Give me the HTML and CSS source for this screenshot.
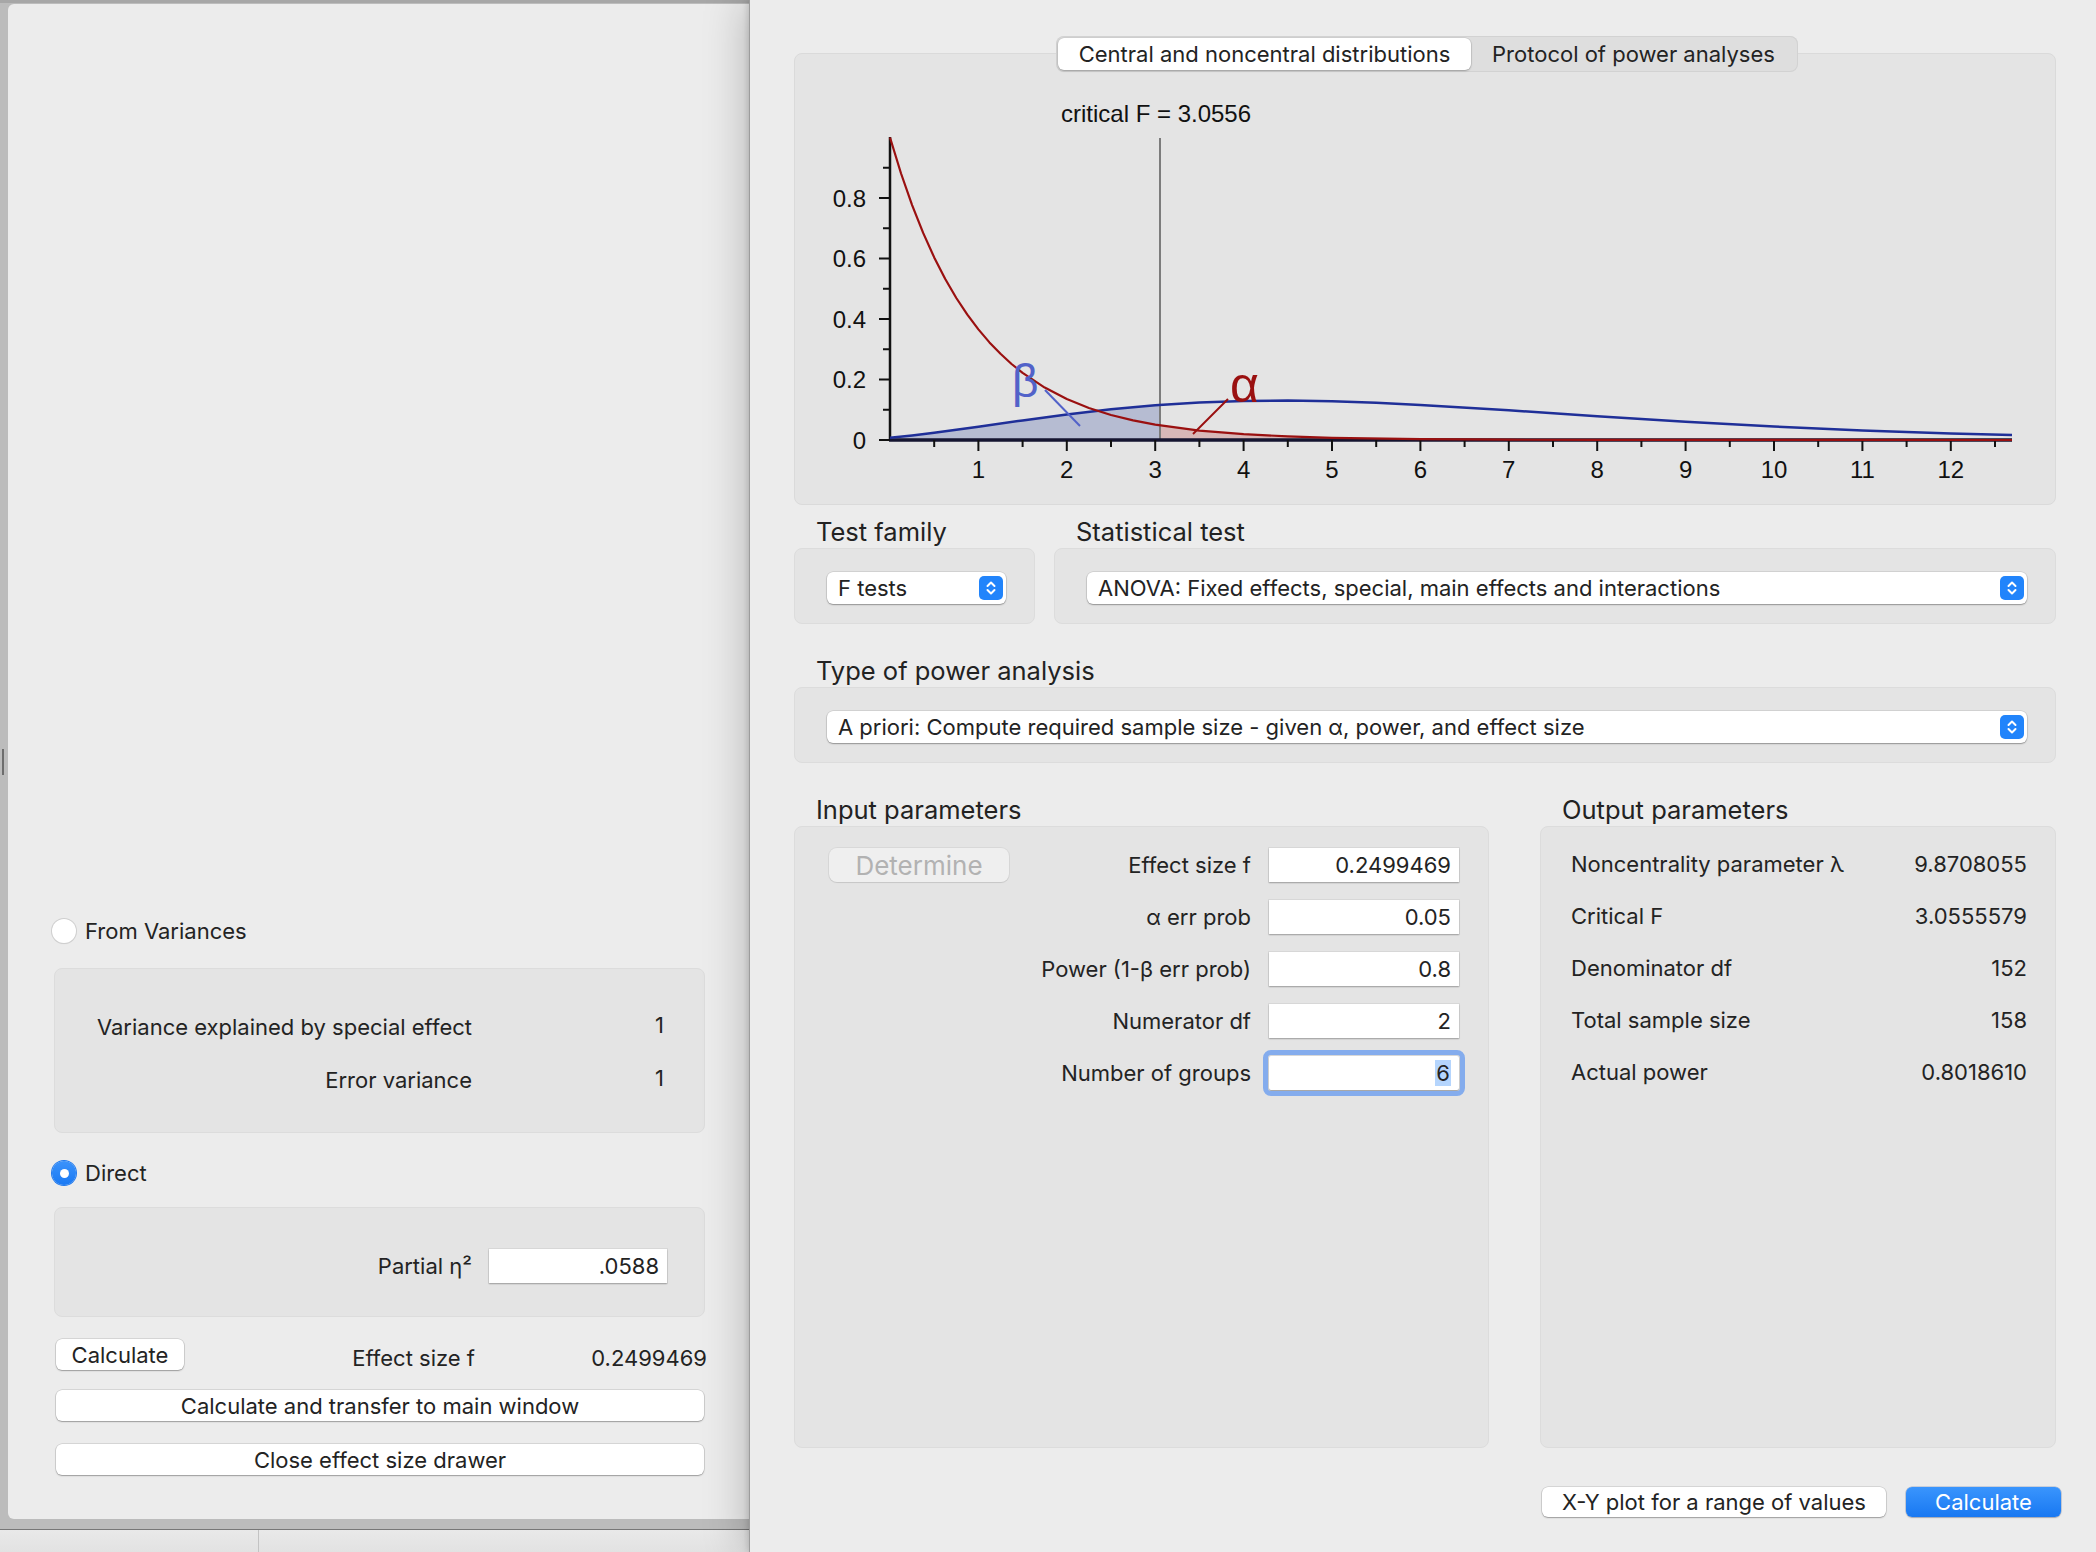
FILE: index.html
```html
<!DOCTYPE html>
<html>
<head>
<meta charset="utf-8">
<link rel="stylesheet" href="styles.css">
</head>
<body>
<div class="screen">
  <div class="side">
    <div class="frame">
      <div class="strip"><span class="handle"></span></div>
      <div class="drawer">
        <div class="radio-row"><span class="radio"></span><span>From Variances</span></div>
        <div class="dbox dbox-var">
          <div class="dgrid">
            <span class="dlabel">Variance explained by special effect</span><span class="dvalue">1</span>
            <span class="dlabel">Error variance</span><span class="dvalue">1</span>
          </div>
        </div>
        <div class="radio-row radio-row-direct"><span class="radio radio-on"></span><span>Direct</span></div>
        <div class="dbox dbox-direct">
          <div class="dgrid">
            <span class="dlabel">Partial η²</span><span class="field">.0588</span>
          </div>
        </div>
        <div class="calc-row">
          <span class="btn btn-small">Calculate</span>
          <span class="dlabel">Effect size f</span>
          <span class="calc-value">0.2499469</span>
        </div>
        <div class="btn btn-wide btn-first">Calculate and transfer to main window</div>
        <div class="btn btn-wide btn-second">Close effect size drawer</div>
      </div>
    </div>
    <div class="dock"><span class="dock-sep"></span></div>
  </div>

  <div class="main">
    <div class="tabs">
      <span class="tab tab-on">Central and noncentral distributions</span>
      <span class="tab tab-off">Protocol of power analyses</span>
    </div>
    <div class="tabbox">
      <svg class="chart" width="1260" height="450" viewBox="0 0 1260 450">
        <g transform="translate(-1,-1)">
          <path class="fill-blue" d="M96,387 L96,384.8 L118.1,382.5 L140.2,379.8 L162.3,376.8 L184.4,373.7 L228.6,367.4 L272.8,361.4 L317,356.2 L361.2,352.2 L366.1,351.8 L366.1,387 Z"/>
          <path class="fill-red" d="M366.1,387 L366.1,372.5 L405.4,377.6 L449.6,381.2 L493.8,383.4 L538,384.8 L626.4,386.1 L714.8,386.7 L803.2,386.9 L1218,387 Z"/>
          <line class="crit" x1="366" y1="85" x2="366" y2="387"/>
          <line class="axis-y" x1="96" y1="84" x2="96" y2="388"/>
          <line class="axis-x" x1="95" y1="387" x2="1218" y2="387"/>
          <g class="ticks">
            <line x1="85" y1="387" x2="96" y2="387"/>
            <line x1="85" y1="326.5" x2="96" y2="326.5"/>
            <line x1="85" y1="266" x2="96" y2="266"/>
            <line x1="85" y1="205.5" x2="96" y2="205.5"/>
            <line x1="85" y1="145" x2="96" y2="145"/>
            <line x1="89" y1="356.75" x2="96" y2="356.75"/>
            <line x1="89" y1="296.25" x2="96" y2="296.25"/>
            <line x1="89" y1="235.75" x2="96" y2="235.75"/>
            <line x1="89" y1="175.25" x2="96" y2="175.25"/>
            <line x1="89" y1="114.75" x2="96" y2="114.75"/>
            <line x1="184.4" y1="387" x2="184.4" y2="398"/>
            <line x1="272.8" y1="387" x2="272.8" y2="398"/>
            <line x1="361.2" y1="387" x2="361.2" y2="398"/>
            <line x1="449.6" y1="387" x2="449.6" y2="398"/>
            <line x1="538" y1="387" x2="538" y2="398"/>
            <line x1="626.4" y1="387" x2="626.4" y2="398"/>
            <line x1="714.8" y1="387" x2="714.8" y2="398"/>
            <line x1="803.2" y1="387" x2="803.2" y2="398"/>
            <line x1="891.6" y1="387" x2="891.6" y2="398"/>
            <line x1="980" y1="387" x2="980" y2="398"/>
            <line x1="1068.4" y1="387" x2="1068.4" y2="398"/>
            <line x1="1156.8" y1="387" x2="1156.8" y2="398"/>
            <line x1="140.2" y1="387" x2="140.2" y2="394"/>
            <line x1="228.6" y1="387" x2="228.6" y2="394"/>
            <line x1="317" y1="387" x2="317" y2="394"/>
            <line x1="405.4" y1="387" x2="405.4" y2="394"/>
            <line x1="493.8" y1="387" x2="493.8" y2="394"/>
            <line x1="582.2" y1="387" x2="582.2" y2="394"/>
            <line x1="670.6" y1="387" x2="670.6" y2="394"/>
            <line x1="759" y1="387" x2="759" y2="394"/>
            <line x1="847.4" y1="387" x2="847.4" y2="394"/>
            <line x1="935.8" y1="387" x2="935.8" y2="394"/>
            <line x1="1024.2" y1="387" x2="1024.2" y2="394"/>
            <line x1="1112.6" y1="387" x2="1112.6" y2="394"/>
            <line x1="1201" y1="387" x2="1201" y2="394"/>
          </g>
          <path class="curve-blue" d="M96,384.8 L118.1,382.5 L140.2,379.8 L162.3,376.8 L184.4,373.7 L228.6,367.4 L272.8,361.4 L317,356.2 L361.2,352.2 L405.4,349.4 L449.6,347.9 L493.8,347.5 L538,348.2 L582.2,349.7 L626.4,351.9 L714.8,357.3 L803.2,363.2 L891.6,368.8 L980,373.6 L1068.4,377.4 L1156.8,380.4 L1218,382"/>
          <path class="curve-red" d="M96,84.5 L107.05,120.5 L118.1,152.1 L129.15,179.9 L140.2,204.4 L151.25,226 L162.3,245 L173.35,261.7 L184.4,276.4 L195.45,289.4 L206.5,300.8 L217.55,311 L228.6,319.8 L250.7,334.6 L272.8,346.1 L294.9,355 L317,362 L339.1,367.4 L361.2,371.7 L405.4,377.6 L449.6,381.2 L493.8,383.4 L538,384.8 L626.4,386.1 L714.8,386.7 L803.2,386.9 L1218,387"/>
          <line class="beta-line" x1="251" y1="337" x2="286" y2="373"/>
          <line class="alpha-line" x1="434" y1="346" x2="399" y2="381"/>
          <text class="crit-label" x="362" y="69">critical F = 3.0556</text>
          <g class="ylabels">
            <text x="72" y="153.5">0.8</text>
            <text x="72" y="214">0.6</text>
            <text x="72" y="274.5">0.4</text>
            <text x="72" y="335">0.2</text>
            <text x="72" y="395.5">0</text>
          </g>
          <g class="xlabels">
            <text x="184.4" y="424.5">1</text>
            <text x="272.8" y="424.5">2</text>
            <text x="361.2" y="424.5">3</text>
            <text x="449.6" y="424.5">4</text>
            <text x="538" y="424.5">5</text>
            <text x="626.4" y="424.5">6</text>
            <text x="714.8" y="424.5">7</text>
            <text x="803.2" y="424.5">8</text>
            <text x="891.6" y="424.5">9</text>
            <text x="980" y="424.5">10</text>
            <text x="1068.4" y="424.5">11</text>
            <text x="1156.8" y="424.5">12</text>
          </g>
          <text class="beta" x="218" y="344">β</text>
          <text class="alpha" x="436" y="349">α</text>
        </g>
      </svg>
    </div>

    <div class="pair">
      <div class="group">
        <div class="group-title">Test family</div>
        <div class="gbox gbox-sel">
          <div class="popup"><span class="popup-text">F tests</span>
            <svg class="stepper" width="24" height="24" viewBox="0 0 24 24"><rect x="0" y="0" width="24" height="24" rx="5"/><path d="M8.5 10 L12 6.5 L15.5 10 M8.5 14 L12 17.5 L15.5 14"/></svg>
          </div>
        </div>
      </div>
      <div class="group">
        <div class="group-title">Statistical test</div>
        <div class="gbox gbox-sel">
          <div class="popup"><span class="popup-text">ANOVA: Fixed effects, special, main effects and interactions</span>
            <svg class="stepper" width="24" height="24" viewBox="0 0 24 24"><rect x="0" y="0" width="24" height="24" rx="5"/><path d="M8.5 10 L12 6.5 L15.5 10 M8.5 14 L12 17.5 L15.5 14"/></svg>
          </div>
        </div>
      </div>
    </div>

    <div class="group group-type">
      <div class="group-title">Type of power analysis</div>
      <div class="gbox gbox-sel">
        <div class="popup"><span class="popup-text">A priori: Compute required sample size - given α, power, and effect size</span>
          <svg class="stepper" width="24" height="24" viewBox="0 0 24 24"><rect x="0" y="0" width="24" height="24" rx="5"/><path d="M8.5 10 L12 6.5 L15.5 10 M8.5 14 L12 17.5 L15.5 14"/></svg>
        </div>
      </div>
    </div>

    <div class="params-pair">
      <div class="group">
        <div class="group-title">Input parameters</div>
        <div class="gbox in-box">
          <span class="determine">Determine</span>
          <div class="params">
            <span class="plabel">Effect size f</span><span class="field">0.2499469</span>
            <span class="plabel">α err prob</span><span class="field">0.05</span>
            <span class="plabel">Power (1-β err prob)</span><span class="field">0.8</span>
            <span class="plabel">Numerator df</span><span class="field">2</span>
            <span class="plabel">Number of groups</span><span class="field field-focus"><span class="sel">6</span></span>
          </div>
        </div>
      </div>
      <div class="group">
        <div class="group-title">Output parameters</div>
        <div class="gbox out-box">
          <span>Noncentrality parameter λ</span><span class="oval">9.8708055</span>
          <span>Critical F</span><span class="oval">3.0555579</span>
          <span>Denominator df</span><span class="oval">152</span>
          <span>Total sample size</span><span class="oval">158</span>
          <span>Actual power</span><span class="oval">0.8018610</span>
        </div>
      </div>
    </div>

    <div class="actions">
      <span class="btn btn-xy">X-Y plot for a range of values</span>
      <span class="btn btn-blue">Calculate</span>
    </div>
  </div>
</div>
</body>
</html>
```
FILE: styles.css
```css
* { box-sizing: border-box; }

html, body {
  margin: 0;
  padding: 0;
}

body {
  width: 2096px;
  height: 1552px;
  overflow: hidden;
  background: #e6e6e6;
  font-family: Inter, "Open Sans", "DejaVu Sans", sans-serif;
  font-size: 22px;
  color: #232323;
}

.screen {
  display: flex;
  height: 1552px;
}

/* ---------- left drawer ---------- */
.side {
  width: 749px;
  flex: none;
  display: flex;
  flex-direction: column;
}

.frame {
  height: 1530px;
  display: flex;
  background: #bcbcbc;
  border-top: 3px solid #a7a7a7;
  padding: 1px 0 10px 0;
  border-bottom: 1px solid #777;
}

.strip {
  width: 8px;
  flex: none;
  display: flex;
  align-items: center;
}

.handle {
  display: block;
  width: 2px;
  height: 26px;
  margin-left: 2px;
  background: #6d6d6d;
}

.drawer {
  flex: 1;
  background: #ececec;
  border-radius: 6px 0 0 6px;
  display: flex;
  flex-direction: column;
  justify-content: flex-end;
  padding: 0 44px 44px 44px;
}

.radio-row {
  display: flex;
  align-items: center;
  height: 24px;
  gap: 9px;
  margin-bottom: 25px;
}

.radio-row-direct {
  margin-top: 28px;
  margin-bottom: 22px;
}

.radio {
  width: 24px;
  height: 24px;
  border-radius: 50%;
  background: #fff;
  box-shadow: 0 0 0 1px #cfcfcf, 0 1px 1px rgba(0,0,0,0.12);
  display: flex;
  align-items: center;
  justify-content: center;
}

.radio-on {
  background: linear-gradient(#3b93fb, #1a79f3);
  box-shadow: 0 0 0 1px #1d78ee;
}

.radio-on::after {
  content: "";
  width: 9px;
  height: 9px;
  border-radius: 50%;
  background: #fff;
}

.dbox {
  margin-left: 2px;
  background: #e4e4e4;
  border: 1px solid #dcdcdc;
  border-radius: 8px;
  padding-right: 37px;
}

.dbox-var {
  height: 165px;
  padding-top: 41px;
}

.dbox-direct {
  height: 110px;
  padding-top: 41px;
}

.dgrid {
  display: grid;
  grid-template-columns: 1fr 178px;
  column-gap: 17px;
  row-gap: 19px;
  grid-auto-rows: 34px;
  align-items: center;
}

.dlabel {
  text-align: right;
  white-space: nowrap;
}

.dvalue {
  text-align: right;
  padding-right: 3px;
  align-self: start;
  line-height: 30px;
}

.field {
  display: block;
  height: 34px;
  line-height: 34px;
  background: #fff;
  text-align: right;
  padding-right: 8px;
  box-shadow: 0 0 0 1px rgba(0,0,0,0.05), 0 1px 1.5px rgba(0,0,0,0.28);
}

.calc-row {
  margin-top: 21px;
  margin-left: 4px;
  margin-right: -2px;
  height: 31px;
  display: grid;
  grid-template-columns: 128px 1fr 232px;
  align-items: center;
}

.calc-row .dlabel {
  margin-top: 7px;
}

.calc-value {
  text-align: right;
  margin-top: 7px;
}

.btn {
  display: flex;
  align-items: center;
  justify-content: center;
  background: #fff;
  border-radius: 6px;
  box-shadow: 0 0 0 0.5px rgba(0,0,0,0.18), 0 1px 1.5px rgba(0,0,0,0.28);
  white-space: nowrap;
}

.btn-small {
  height: 31px;
}

.btn-wide {
  height: 31px;
  margin-left: 4px;
  margin-right: 1px;
}

.btn-first { margin-top: 21px; }
.btn-second { margin-top: 23px; }

.dock {
  flex: 1;
  background: linear-gradient(#e9e9e9, #e2e2e2);
  padding-left: 258px;
}

.dock-sep {
  display: block;
  width: 1px;
  height: 100%;
  background: #c3c3c3;
}

/* ---------- main window ---------- */
.main {
  flex: 1;
  position: relative;
  background: #ececec;
  border-left: 1px solid #9c9c9c;
  box-shadow: -4px 0 40px rgba(0,0,0,0.22), -1px 0 6px rgba(0,0,0,0.15);
  padding: 36px 40px 0 44px;
  display: flex;
  flex-direction: column;
}

.tabs {
  position: relative;
  z-index: 1;
  align-self: center;
  display: flex;
  height: 36px;
  margin-bottom: -19px;
  margin-left: 4px;
  background: #dedede;
  border-radius: 8px;
  box-shadow: inset 0 0 0 1px #d2d2d2;
  padding: 2px;
}

.tab {
  display: flex;
  align-items: center;
  justify-content: center;
  border-radius: 6px;
  white-space: nowrap;
}

.tab-on {
  width: 413px;
  background: #fff;
  box-shadow: 0 0 0 0.5px rgba(0,0,0,0.12), 0 1px 2px rgba(0,0,0,0.25);
}

.tab-off {
  width: 325px;
}

.tabbox {
  height: 452px;
  background: #e4e4e4;
  border: 1px solid #dadada;
  border-radius: 8px;
}

.chart {
  display: block;
}

.chart text {
  font-family: "Liberation Sans", Arial, sans-serif;
  font-size: 24px;
  fill: #111;
}

.chart .crit-label { text-anchor: middle; }
.chart .ylabels text { text-anchor: end; }
.chart .xlabels text { text-anchor: middle; }

.fill-blue { fill: #b6bcd2; }
.fill-red { fill: #d8b8b8; }

.crit {
  stroke: #7c7c7c;
  stroke-width: 2;
}

.axis-y {
  stroke: #111;
  stroke-width: 2.5;
}

.axis-x {
  stroke: #151530;
  stroke-width: 3.5;
}

.ticks line {
  stroke: #111;
  stroke-width: 2;
}

.curve-blue {
  fill: none;
  stroke: #1f2f98;
  stroke-width: 2.5;
  stroke-linejoin: round;
}

.curve-red {
  fill: none;
  stroke: #9a1010;
  stroke-width: 2.2;
  stroke-linejoin: round;
}

.beta-line {
  stroke: #5262c9;
  stroke-width: 2;
}

.alpha-line {
  stroke: #9a1010;
  stroke-width: 2;
}

.chart .beta {
  font-size: 46px;
  fill: #5262c9;
}

.chart .alpha {
  font-size: 50px;
  fill: #9a1010;
}

/* groups */
.pair {
  margin-top: 12px;
  display: grid;
  grid-template-columns: 241px 1fr;
  column-gap: 19px;
}

.group-title {
  font-size: 25.5px;
  height: 31px;
  line-height: 29px;
  padding-left: 22px;
  color: #222;
}

.gbox {
  background: #e4e4e4;
  border: 1px solid #dcdcdc;
  border-radius: 8px;
}

.gbox-sel {
  height: 76px;
  padding: 23px 28px 0 32px;
}

.group-type {
  margin-top: 32px;
}

.popup {
  height: 32px;
  display: flex;
  align-items: center;
  justify-content: space-between;
  background: #fff;
  border-radius: 6px;
  box-shadow: 0 0 0 0.5px rgba(0,0,0,0.15), 0 1px 1.5px rgba(0,0,0,0.3);
  padding: 0 3px 0 11px;
  white-space: nowrap;
}

.stepper rect { fill: #2184fb; }
.stepper path {
  fill: none;
  stroke: #fff;
  stroke-width: 2;
  stroke-linecap: round;
  stroke-linejoin: round;
}

.params-pair {
  margin-top: 32px;
  display: grid;
  grid-template-columns: 695px 1fr;
  column-gap: 51px;
}

.in-box {
  height: 622px;
  display: flex;
  align-items: flex-start;
  padding: 21px 29px 0 34px;
}

.determine {
  flex: none;
  width: 180px;
  height: 34px;
  display: flex;
  align-items: center;
  justify-content: center;
  font-size: 26px;
  color: #b2b2b2;
  background: #efefef;
  border-radius: 8px;
  box-shadow: 0 0 0 1px rgba(0,0,0,0.05), 0 1px 1px rgba(0,0,0,0.08);
}

.params {
  flex: 1;
  display: grid;
  grid-template-columns: 1fr 190px;
  column-gap: 18px;
  row-gap: 18px;
  grid-auto-rows: 34px;
  align-items: center;
}

.plabel {
  text-align: right;
  white-space: nowrap;
}

.field-focus {
  outline: 5px solid #84aced;
  outline-offset: 1px;
  border-radius: 2px;
}

.sel {
  background: #b5d5fd;
  padding: 0 1px;
}

.out-box {
  height: 622px;
  display: grid;
  grid-template-columns: 1fr auto;
  grid-auto-rows: 34px;
  row-gap: 18px;
  align-content: start;
  align-items: center;
  padding: 20px 28px 0 30px;
}

.oval {
  text-align: right;
}

.actions {
  margin-top: 39px;
  margin-right: -5px;
  display: flex;
  justify-content: flex-end;
  gap: 20px;
}

.btn-xy {
  width: 344px;
  height: 30px;
}

.btn-blue {
  width: 155px;
  height: 30px;
  color: #fff;
  background: linear-gradient(#3a95fd, #1878f2);
  box-shadow: 0 0 0 0.5px rgba(0,40,120,0.3), 0 1px 1.5px rgba(0,0,0,0.2);
}
```
